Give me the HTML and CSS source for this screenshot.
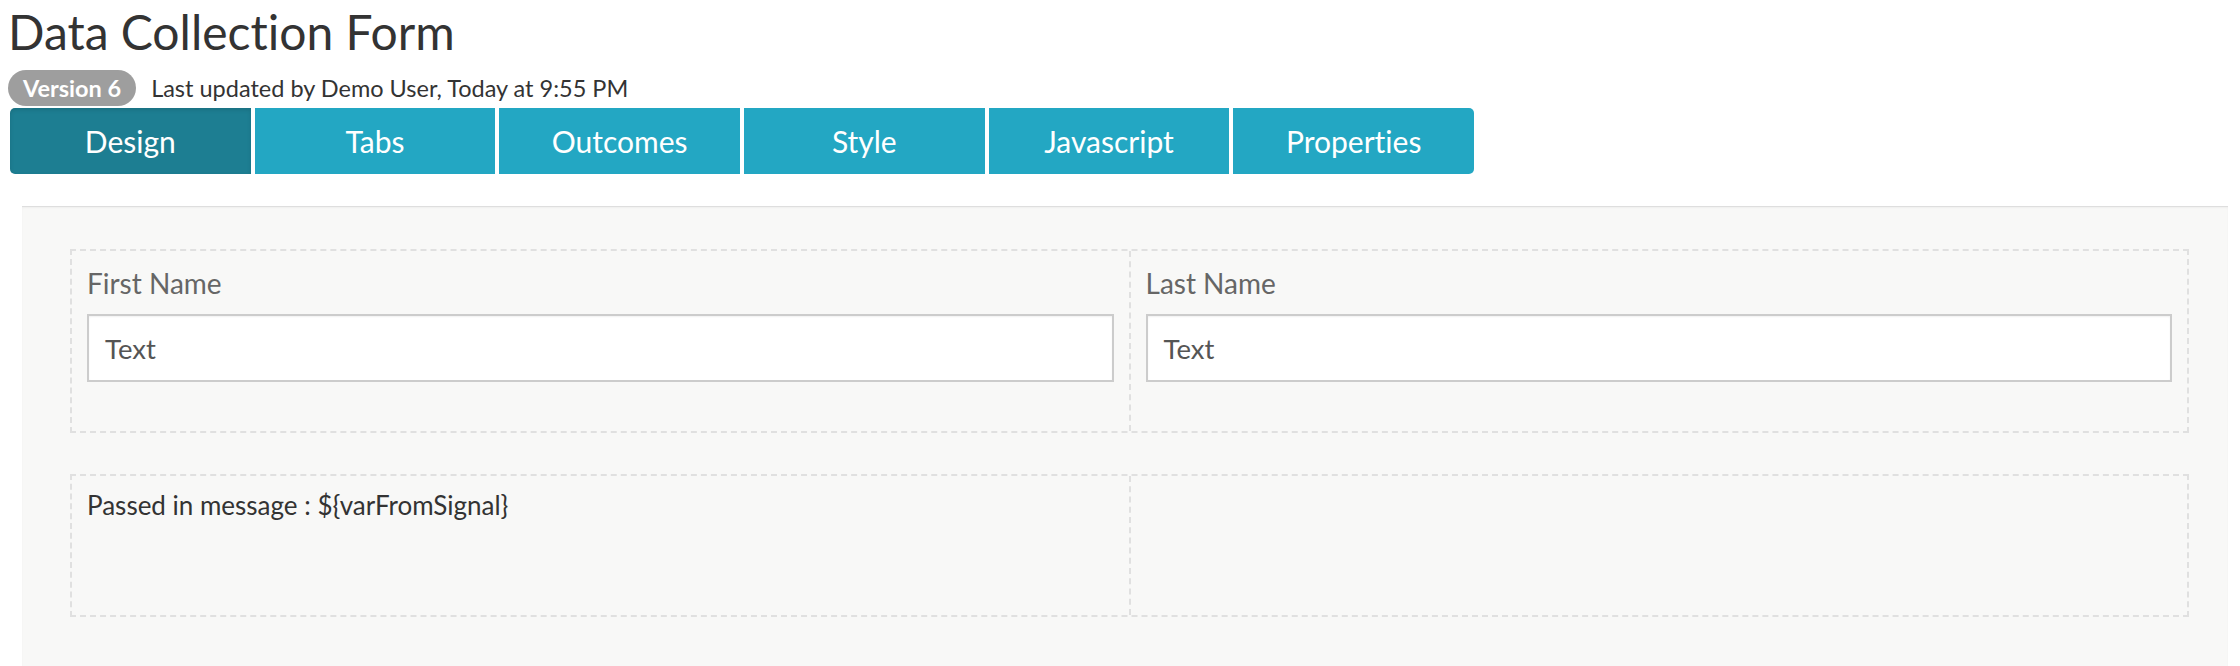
FILE: index.html
```html
<!DOCTYPE html>
<html lang="en">
<head>
<meta charset="utf-8">
<title>Data Collection Form</title>
<link rel="stylesheet" href="styles.css">
</head>
<body>
<header class="header">
  <h1 class="title">Data Collection Form</h1>
  <div class="meta">
    <span class="badge">Version 6</span>
    <span class="updated">Last updated by Demo User, Today at 9:55 PM</span>
  </div>
  <nav class="tabs">
    <a class="tab tab-active">Design</a>
    <a class="tab">Tabs</a>
    <a class="tab">Outcomes</a>
    <a class="tab">Style</a>
    <a class="tab">Javascript</a>
    <a class="tab">Properties</a>
  </nav>
</header>
<main class="panel">
  <div class="row">
    <div class="col">
      <label class="field-label">First Name</label>
      <div class="input">Text</div>
    </div>
    <div class="col col-right">
      <label class="field-label">Last Name</label>
      <div class="input">Text</div>
    </div>
  </div>
  <div class="row row-msg">
    <div class="col col-msg">
      <p class="message">Passed in message : ${varFromSignal}</p>
    </div>
    <div class="col col-right col-msg"></div>
  </div>
</main>
</body>
</html>
```

FILE: styles.css
```css
* {
  box-sizing: border-box;
}

html, body {
  margin: 0;
  padding: 0;
  background: #ffffff;
  font-family: Lato, "Open Sans", "Liberation Sans", sans-serif;
  font-variant-ligatures: none;
  color: #333333;
}

body {
  height: 666px;
  overflow: hidden;
}

.header {
  padding: 0 8px;
}

.title {
  margin: 3px 0 0 0;
  font-size: 48px;
  line-height: 57px;
  font-weight: 400;
  color: #333333;
}

.meta {
  display: flex;
  align-items: center;
  gap: 15px;
  margin-top: 10px;
  height: 36px;
}

.badge {
  display: inline-flex;
  align-items: center;
  height: 36px;
  padding: 0 15px 0 15px;
  border-radius: 18px;
  background: #9e9e9e;
  color: #ffffff;
  font-weight: 700;
  font-size: 23.5px;
}

.updated {
  font-size: 23.5px;
  color: #333333;
}

.tabs {
  display: flex;
  gap: 4px;
  width: 1464px;
  margin: 2px 0 0 2px;
}

.tab {
  flex: 1 1 0;
  height: 66px;
  display: flex;
  align-items: center;
  justify-content: center;
  background: #23a7c3;
  color: #ffffff;
  font-size: 30px;
  text-decoration: none;
}

.tab:first-child {
  border-radius: 5px 0 0 5px;
}

.tab:last-child {
  border-radius: 0 5px 5px 0;
}

.tab-active {
  background: #1d7e92;
  box-shadow: inset 0 2px 4px rgba(0, 0, 0, 0.12);
}

.panel {
  margin: 32px 12px 0 22px;
  padding: 42px 39px 60px 48px;
  background: #f8f8f7;
  border-top: 1px solid #dedede;
  box-shadow: inset 0 1px 2px rgba(0, 0, 0, 0.04);
  min-height: 460px;
}

.row {
  display: flex;
  border: 2px dashed #e0e0e0;
}

.row + .row {
  margin-top: 41px;
}

.col {
  flex: 1 1 0;
  padding: 18px 15px 49px 15px;
}

.col-right {
  border-left: 2px dashed #e0e0e0;
}

.field-label {
  display: block;
  font-size: 28px;
  line-height: 29px;
  color: #666666;
  margin-bottom: 16px;
}

.input {
  height: 68px;
  display: flex;
  align-items: center;
  padding: 0 16px;
  background: #ffffff;
  border: 2px solid #cccccc;
  box-shadow: inset 0 1px 2px rgba(0, 0, 0, 0.06);
  font-size: 27.5px;
  color: #555555;
}

.row-msg {
  min-height: 143px;
}

.col-msg {
  padding: 15px 15px;
}

.message {
  margin: 0;
  font-size: 26px;
  line-height: 29px;
  color: #333333;
}
```
